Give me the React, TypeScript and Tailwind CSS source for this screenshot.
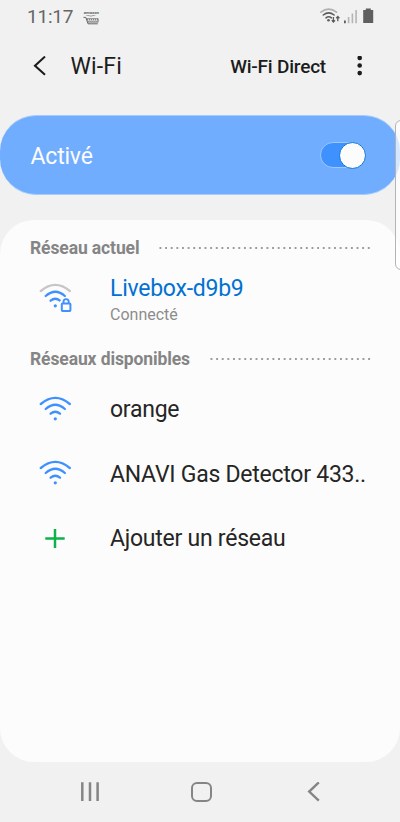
import React from 'react';
import type { ReactNode } from 'react';

const networks = ['orange', 'ANAVI Gas Detector 433..'];

function WifiArcs({ outer = '#3e91ff' }: { outer?: string }) {
  return (
    <>
      <g fill="none" strokeWidth="2.3" strokeLinecap="round">
        <path d="M1.8 8Q16.3 -4.2 30.8 8" stroke={outer} />
        <path d="M6.7 13Q16.3 4.6 25.9 13" stroke="#3e91ff" />
        <path d="M11.6 17.7Q16.3 13.9 21 17.7" stroke="#3e91ff" />
      </g>
      <circle cx="16.3" cy="22.8" r="1.6" fill="#3e91ff" />
    </>
  );
}

function WifiIcon() {
  return (
    <svg className="h-7 w-[34px]" viewBox="0 0 34 28">
      <WifiArcs />
    </svg>
  );
}

function SecuredWifiIcon() {
  return (
    <svg className="h-8 w-[34px]" viewBox="0 0 34 32">
      <WifiArcs outer="#c6c6c6" />
      <path d="M20.8 30V19l3-4.5h6.5l3 4.5V30z" fill="#fcfcfc" />
      <rect x="22.8" y="20.4" width="8.6" height="7.6" rx="0.8" fill="none" stroke="#3e91ff" strokeWidth="2" />
      <path d="M24.5 20.2v-1.5a2.6 2.6 0 0 1 5.2 0v1.5" fill="none" stroke="#3e91ff" strokeWidth="1.9" />
    </svg>
  );
}

function StatusBar() {
  return (
    <div className="flex h-8 items-center pl-[27px] pr-[26px] text-[#666]">
      <span className="mt-[2px] text-[19px] leading-5 tracking-[-0.2px]">11:17</span>
      {/* Shopping notification */}
      <div className="ml-[10px] mt-[3px] flex w-4 flex-col items-center">
        <span className="text-[4.3px] font-bold leading-[4px] text-[#666]">amazon</span>
        <svg className="h-[10px] w-4" viewBox="0 0 16 10" fill="none" stroke="#666">
          <path d="M3 0Q8 2.2 12.5 0" strokeWidth="0.6" />
          <path d="M0.5 2.4h2.3l2.2 6.4h9.8" strokeWidth="1" />
          <path d="M3.5 3.6h11.7v3.6H5" strokeWidth="0.7" />
          <path d="M4 4.7h11M4.5 6.3h10.5" strokeWidth="1.1" strokeDasharray="1.2 0.8" />
        </svg>
      </div>
      <svg className="ml-auto h-4 w-[54px]" viewBox="0 0 54 16">
        <g fill="none" strokeWidth="1.6" strokeLinecap="round">
          <path d="M0.9 4.2Q8.7 -2.1 16.5 4.2" stroke="#b0b0b0" />
          <path d="M3.3 7Q8.7 2.6 14.1 7" stroke="#5c5c5c" />
          <path d="M6 9.8Q8.7 7.7 11.4 9.8" stroke="#5c5c5c" />
        </g>
        <circle cx="8.5" cy="12.3" r="1.3" fill="#5c5c5c" />
        <path d="M13.4 9v5M11.8 12.3l1.6 1.8 1.6-1.8M17.8 13.3V8.6M16.2 10.3l1.6-1.8 1.6 1.8" fill="none" stroke="#5c5c5c" strokeWidth="1.3" />
        <path d="M24.9 12.6v2.7" stroke="#5c5c5c" strokeWidth="1.8" />
        <path d="M28.6 9v6.3M32.4 5.4v9.9M36.1 1.9v13.4" stroke="#b5b5b5" strokeWidth="1.6" />
        <path d="M45.8 0.6h5v1.5h2.4v13h-10v-13h2.6z" fill="#5f5f5f" />
      </svg>
    </div>
  );
}

function SectionTitle({ children }: { children: ReactNode }) {
  return (
    <div className="flex items-center gap-[20px] pl-[30px] pr-[29px]">
      <h2 className="whitespace-nowrap text-[17.5px] font-bold leading-6 tracking-[-0.11px] text-[#858585]">{children}</h2>
      <svg className="-mt-px h-[2px] min-w-0 flex-1">
        <line x1="0.5" y1="1" x2="100%" y2="1" stroke="#9c9c9c" strokeWidth="1.8" strokeDasharray="1.9 3.73" />
      </svg>
    </div>
  );
}

function Row({ icon, children }: { icon: ReactNode; children: ReactNode }) {
  return (
    <li className="flex h-[64.3px] items-center">
      <div className="ml-[38.5px] mr-[37.5px] flex w-[34px]">{icon}</div>
      <span className="mt-px whitespace-nowrap text-[23px] tracking-[-0.25px] text-[#252525]">{children}</span>
    </li>
  );
}

export default function App() {
  return (
    <div className="relative flex h-[822px] w-[400px] flex-col overflow-hidden bg-[#f1f1f1] font-['Roboto',sans-serif]">
      <StatusBar />

      <header className="flex h-[68px] items-center pl-[33px] pr-[36px] text-[#1c1c1c]">
        <svg className="h-5 w-[14px]" viewBox="0 0 14 20" fill="none" stroke="#1c1c1c" strokeWidth="2.1">
          <path d="M12 0.6L2 9.8L12 18.8" />
        </svg>
        <h1 className="ml-[23.5px] mt-[2px] text-[23px] leading-7 tracking-[0.15px]">Wi-Fi</h1>
        <span className="ml-auto mt-px text-[19px] font-medium leading-6 tracking-[-0.2px]">Wi-Fi Direct</span>
        <svg className="ml-[30px] h-5 w-2" viewBox="0 0 8 20" fill="#1c1c1c">
          <circle cx="3.7" cy="1.9" r="2.3" />
          <circle cx="3.7" cy="9.5" r="2.3" />
          <circle cx="3.7" cy="17.1" r="2.3" />
        </svg>
      </header>

      {/* Wi-Fi master switch */}
      <section className="mt-[15px] flex h-20 items-center justify-between rounded-[36px] border-y border-[#a5cbfb] bg-[#70adff] pl-[30.5px] pr-[34px]">
        <span className="mt-[3px] text-[23px] leading-7 tracking-[-0.2px] text-[#fcfcfc]">Activé</span>
        <div className="flex h-[26px] w-[46px] items-center rounded-full border border-[#9cc7ff] bg-[#3e91ff] pl-[17.5px]">
          <div className="h-[27px] w-[27px] shrink-0 rounded-full border border-[#0d75d6] bg-[#fcfcfc]" />
        </div>
      </section>

      <main className="mt-[25px] h-[542px] rounded-[34px] bg-[#fcfcfc] pt-[16px]">
        <SectionTitle>Réseau actuel</SectionTitle>
        <div className="flex h-[87px] items-start pt-4">
          <div className="ml-[38.5px] mr-[37.5px] mt-[7px]">
            <SecuredWifiIcon />
          </div>
          <div>
            <p className="text-[23px] leading-[26px] tracking-[-0.25px] text-[#0072d2]">Livebox-d9b9</p>
            <p className="mt-[3px] text-[16px] leading-5 text-[#8c8c8c]">Connecté</p>
          </div>
        </div>

        <SectionTitle>Réseaux disponibles</SectionTitle>
        <ul className="mt-[7px]">
          {networks.map((name) => (
            <Row key={name} icon={<WifiIcon />}>
              {name}
            </Row>
          ))}
          <Row
            icon={
              <svg className="ml-[6.5px] h-5 w-5" viewBox="0 0 20 20" stroke="#0fb14b" strokeWidth="2.5">
                <path d="M10 0v19M0.3 9.5h19.4" />
              </svg>
            }
          >
            Ajouter un réseau
          </Row>
        </ul>
      </main>

      <nav className="flex h-[60px] items-center pl-20 pr-[79px]">
        <svg className="h-5 w-5" viewBox="0 0 20 20" stroke="#858585" strokeWidth="2.5">
          <path d="M2.3 0.2v18.8M10 0.2v18.8M17.6 0.2v18.8" />
        </svg>
        <div className="-mt-px ml-[91px] h-5 w-[21px] rounded-[6px] border-2 border-[#858585]" />
        <svg className="ml-auto h-5 w-[14px]" viewBox="0 0 14 20" fill="none" stroke="#858585" strokeWidth="2.4">
          <path d="M11.8 0.4L2.2 9.6L11.8 18.6" />
        </svg>
      </nav>

      {/* Edge panel handle */}
      <div className="absolute left-[395px] top-[120px] h-[150px] w-3 rounded-[6px] border border-[#b4b4b4] bg-white/70" />
    </div>
  );
}
